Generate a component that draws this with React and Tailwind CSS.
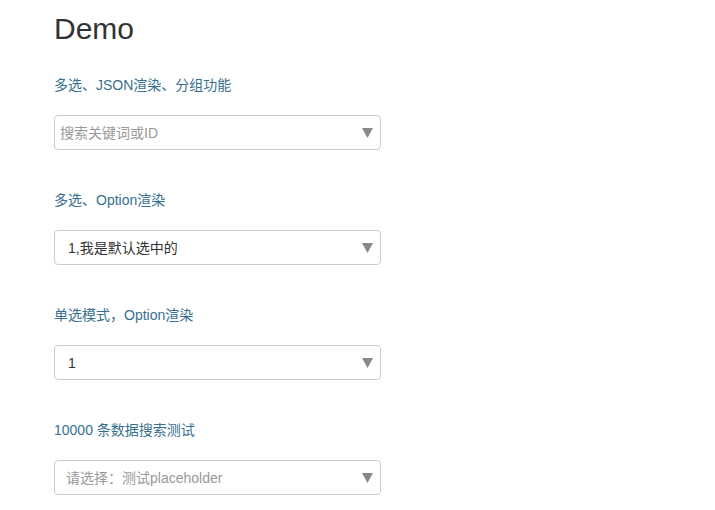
import React from "react";

const font = { fontFamily: '"Liberation Sans", Arial, "Noto Sans CJK SC", sans-serif' };

const Caret = () => (
  <svg width="11" height="10" viewBox="0 0 11 10" className="shrink-0">
    <path d="M0 0 H11 L5.5 10 Z" fill="#888" />
  </svg>
);

const SelectBox = ({ text, muted, pad = "pl-[5px]" }) => (
  <div className={`flex h-[35px] w-[327px] items-center justify-between rounded-[4px] border border-[#ccc] bg-white pr-[7px] ${pad}`}>
    <span className={`pt-[1px] text-[14px] ${muted ? "text-[#999]" : "text-[#333]"}`}>{text}</span>
    <Caret />
  </div>
);

const Field = ({ label, children, first }) => (
  <div className={first ? "" : "mt-[40px]"}>
    <div className="mb-[20px] text-[14px] leading-[20px] text-[#37708f]">{label}</div>
    {children}
  </div>
);

export default function App() {
  return (
    <div className="min-h-[510px] w-[715px] bg-white pl-[54px] text-[#333]" style={font}>
      <h1 className="pt-[11px] text-[30px] leading-[36px] text-[#333]">Demo</h1>
      <div className="mt-[28px]">
        <Field label="多选、JSON渲染、分组功能" first>
          <SelectBox text="搜索关键词或ID" muted />
        </Field>
        <Field label="多选、Option渲染">
          <SelectBox text="1,我是默认选中的" pad="pl-[13px]" />
        </Field>
        <Field label="单选模式，Option渲染">
          <SelectBox text="1" pad="pl-[13px]" />
        </Field>
        <Field label="10000 条数据搜索测试">
          <SelectBox text="请选择：测试placeholder" muted pad="pl-[11px]" />
        </Field>
      </div>
    </div>
  );
}
